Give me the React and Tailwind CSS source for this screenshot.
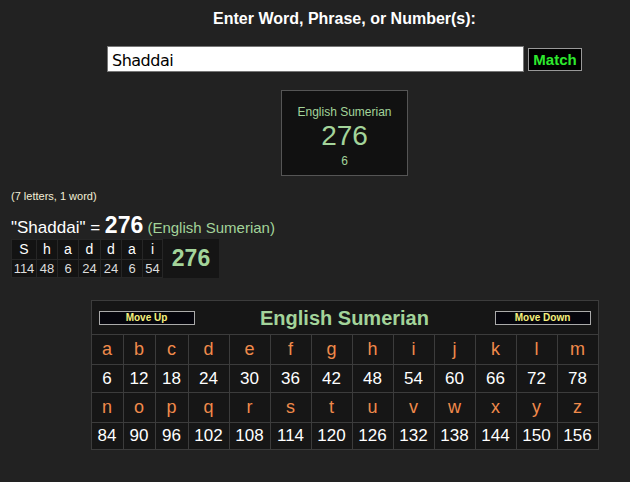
const GREEN = "text-[#a3d49a]";

const ROW1 = [
  ["a", 6], ["b", 12], ["c", 18], ["d", 24], ["e", 30], ["f", 36], ["g", 42],
  ["h", 48], ["i", 54], ["j", 60], ["k", 66], ["l", 72], ["m", 78],
];
const ROW2 = [
  ["n", 84], ["o", 90], ["p", 96], ["q", 102], ["r", 108], ["s", 114], ["t", 120],
  ["u", 126], ["v", 132], ["w", 138], ["x", 144], ["y", 150], ["z", 156],
];

const WORD = [
  ["S", 114], ["h", 48], ["a", 6], ["d", 24], ["d", 24], ["a", 6], ["i", 54],
];

function Letters({ row }) {
  return row.map(([l]) => (
    <div key={l} className="bg-[#161616] h-[29px] flex items-center justify-center text-[18px] text-[#f08a4b]">
      {l}
    </div>
  ));
}

function Numbers({ row, h }) {
  return row.map(([l, n]) => (
    <div key={l} className={`bg-[#161616] ${h} flex items-center justify-center text-[17px] text-white`}>
      {n}
    </div>
  ));
}

export default function App() {
  return (
    <div className="w-[630px] h-[482px] overflow-hidden bg-[#222222] font-['Liberation_Sans',Arial,sans-serif]">
      <div className="w-[689px] flex flex-col">
        <div className="mt-[10px] h-[18px] text-center text-[16px] leading-[18px] font-bold text-white">
          Enter Word, Phrase, or Number(s):
        </div>

        <div className="mt-[18px] flex justify-center items-center gap-[4px]">
          <input
            defaultValue="Shaddai"
            className="w-[417px] h-[26px] bg-white border border-[#767676] px-[4px] pt-[2px] text-[16px] text-black outline-none font-['DejaVu_Sans',sans-serif] tracking-[-0.5px]"
          />
          <button className="w-[54px] h-[23px] bg-black border border-[#999] text-[15px] font-bold text-[#2ee82e] leading-none">
            Match
          </button>
        </div>

        <div className="mt-[18px] self-center w-[127px] h-[86px] bg-[#111111] border border-[#555] flex flex-col items-center">
          <div className={`mt-[14px] text-[12px] leading-[14px] ${GREEN}`}>English Sumerian</div>
          <div className={`mt-[2px] text-[28px] leading-[30px] ${GREEN}`}>276</div>
          <div className={`mt-[3px] text-[12px] leading-[14px] ${GREEN}`}>6</div>
        </div>

        <div className="pl-[11px] mt-[14px] text-[11px] leading-[13px] text-[#f3efd6]">
          (7 letters, 1 word)
        </div>

        <div className="pl-[11px] mt-[5px] h-[24px] flex items-baseline text-white">
          <span className="text-[17px]">"Shaddai" =&nbsp;</span>
          <span className="text-[23px] font-bold">276</span>
          <span className={`text-[15px] ${GREEN}`}>&nbsp;(English Sumerian)</span>
        </div>

        <div className="ml-[11px] mt-[7px] self-start flex bg-[#151515]">
          <div className="grid grid-cols-[24px_20px_20px_21px_20px_20px_19px] grid-rows-[19px_17px] gap-px bg-[#262626] p-px">
            {WORD.map(([l], i) => (
              <div key={"l" + i} className="bg-[#131313] flex items-center justify-center text-[14px] text-white">
                {l}
              </div>
            ))}
            {WORD.map(([, n], i) => (
              <div key={"n" + i} className="bg-[#131313] flex items-center justify-center text-[13px] text-[#dddddd]">
                {n}
              </div>
            ))}
          </div>
          <div className={`w-[56px] flex items-center justify-center text-[23px] font-bold ${GREEN}`}>276</div>
        </div>

        <div className="mt-[22px] self-center w-[508px] grid grid-cols-[31px_31px_32px_repeat(10,40px)] gap-px bg-[#3c3c3c] p-px">
          <div className="col-span-13 bg-[#161616] h-[33px] flex items-center justify-between px-[7px]">
            <button className="w-[96px] h-[14px] bg-[#05050c] border border-[#aaa] text-[10px] leading-none font-bold text-[#f6f07c]">
              Move Up
            </button>
            <span className={`text-[20px] font-bold ${GREEN}`}>English Sumerian</span>
            <button className="w-[96px] h-[14px] bg-[#05050c] border border-[#aaa] text-[10px] leading-none font-bold text-[#f6f07c]">
              Move Down
            </button>
          </div>
          <Letters row={ROW1} />
          <Numbers row={ROW1} h="h-[27px]" />
          <Letters row={ROW2} />
          <Numbers row={ROW2} h="h-[26px]" />
        </div>
      </div>
    </div>
  );
}
